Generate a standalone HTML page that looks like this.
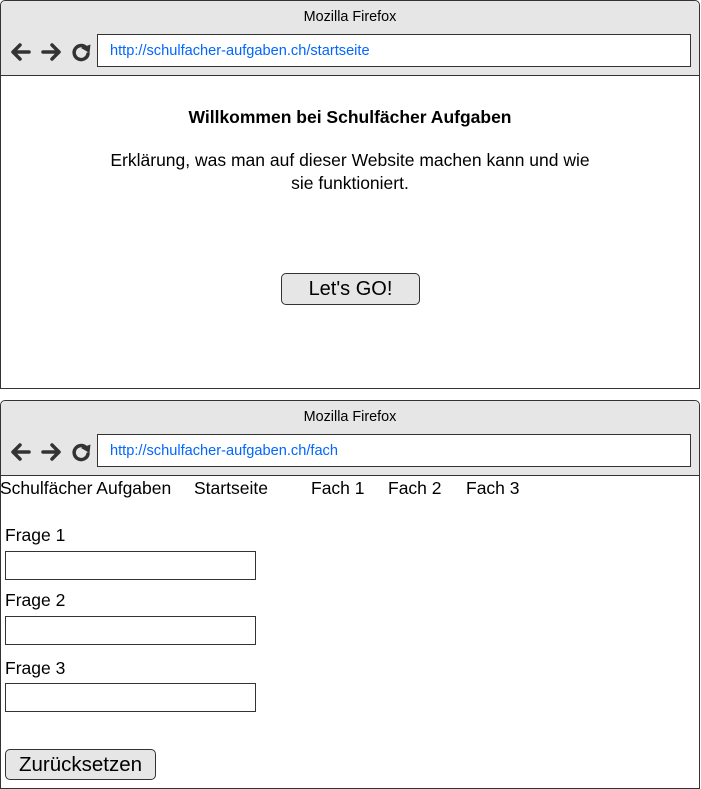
<!DOCTYPE html>
<html><head><meta charset="utf-8"><style>
body{margin:0;width:701px;height:789px;background:#fff;font-family:"Liberation Sans",Arial,sans-serif;position:relative;overflow:hidden}
.a{position:absolute}
.win{position:absolute;left:0;width:698px;border:1px solid #333;border-radius:5px 5px 0 0;background:#fff;box-sizing:content-box}
.hdr{position:absolute;left:0;top:0;width:698px;height:74px;background:#e6e6e6;border-bottom:1px solid #333;border-radius:5px 5px 0 0}
.ttl{position:absolute;left:0;width:698px;top:8px;text-align:center;font-size:14.4px;color:#000}
.url{position:absolute;left:96px;top:33px;width:580px;height:31px;border:1px solid #333;background:#fff;font-size:14.6px;color:#0066ff;line-height:32px;padding-left:12px;box-sizing:content-box}
.t{position:absolute;font-size:17.5px;color:#000;white-space:nowrap}
.inp{position:absolute;left:5px;width:249px;height:27px;border:1px solid #333;background:#fff}
.btn{position:absolute;background:#e6e6e6;border:1px solid #333;border-radius:5px;text-align:center;font-size:20px;color:#000;box-sizing:border-box}
</style></head><body>
<div class="win" style="top:0;height:387px">
<div class="hdr"></div>
<div class="ttl">Mozilla Firefox</div>
<svg class="a" style="left:8px;top:40px" width="84" height="22" viewBox="0 0 84 22">
<g fill="none" stroke="#333" stroke-width="3.5" stroke-linecap="round" stroke-linejoin="round">
<path d="M20 11H4M11 4L4 11L11 18"/>
<path d="M34 11H50M43 4L50 11L43 18"/>
<path d="M77 6.5A7 7 0 1 0 79 13"/>
</g><path d="M72 7L81.5 3.5L80.5 12Z" fill="#333"/></svg>
<div class="url">http://schulfacher-aufgaben.ch/startseite</div>
<div class="t" style="left:0;width:698px;text-align:center;top:106px;font-weight:bold">Willkommen bei Schulfächer Aufgaben</div>
<div class="t" style="left:0;width:698px;text-align:center;top:148px;line-height:23px">Erklärung, was man auf dieser Website machen kann und wie<br>sie funktioniert.</div>
<div class="btn" style="left:280px;top:272px;width:139px;height:32px;line-height:30px">Let's GO!</div>
</div>
<div class="win" style="top:400px;height:387px">
<div class="hdr"></div>
<div class="ttl">Mozilla Firefox</div>
<svg class="a" style="left:8px;top:40px" width="84" height="22" viewBox="0 0 84 22">
<g fill="none" stroke="#333" stroke-width="3.5" stroke-linecap="round" stroke-linejoin="round">
<path d="M20 11H4M11 4L4 11L11 18"/>
<path d="M34 11H50M43 4L50 11L43 18"/>
<path d="M77 6.5A7 7 0 1 0 79 13"/>
</g><path d="M72 7L81.5 3.5L80.5 12Z" fill="#333"/></svg>
<div class="url">http://schulfacher-aufgaben.ch/fach</div>
<div class="t" style="left:-1px;top:77px">Schulfächer Aufgaben</div>
<div class="t" style="left:193px;top:77px">Startseite</div>
<div class="t" style="left:310px;top:77px">Fach 1</div>
<div class="t" style="left:387px;top:77px">Fach 2</div>
<div class="t" style="left:465px;top:77px">Fach 3</div>
<div class="t" style="left:4px;top:124px">Frage 1</div>
<div class="inp" style="left:4px;top:150px"></div>
<div class="t" style="left:4px;top:189px">Frage 2</div>
<div class="inp" style="left:4px;top:215px"></div>
<div class="t" style="left:4px;top:257px">Frage 3</div>
<div class="inp" style="left:4px;top:282px"></div>
<div class="btn" style="left:4px;top:348px;width:151px;height:31px;line-height:30px;font-size:20.5px">Zurücksetzen</div>
</div>
</body></html>
